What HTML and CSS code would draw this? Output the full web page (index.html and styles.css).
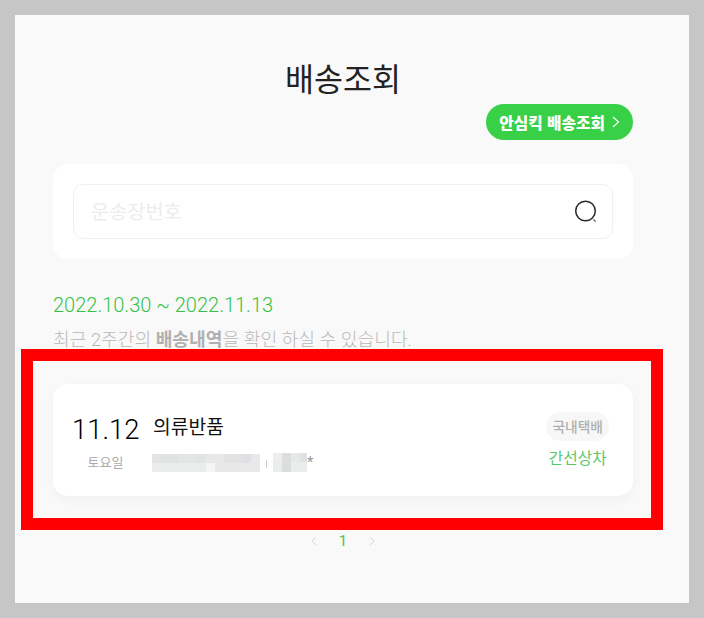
FILE: index.html
```html
<!DOCTYPE html>
<html lang="ko">
<head>
<meta charset="utf-8">
<title>배송조회</title>
<link rel="stylesheet" href="styles.css">
</head>
<body>
<main class="panel">
  <h1 class="title">배송조회</h1>
  <div class="quick-row">
    <a class="quick-btn">안심킥 배송조회
      <svg class="quick-arrow" width="8" height="12" viewBox="0 0 8 12"><path d="M1 1l5.5 5L1 11" fill="none" stroke="#fff" stroke-width="1.1"/></svg>
    </a>
  </div>
  <section class="search-card">
    <div class="search-box">
      <span class="placeholder">운송장번호</span>
      <svg class="search-icon" width="24" height="24" viewBox="0 0 24 24"><circle cx="11.5" cy="11" r="9.8" fill="none" stroke="#2a2a2a" stroke-width="1.5"/><path d="M19.5 19.5l2.2 2.2" fill="none" stroke="#555" stroke-width="1.2"/></svg>
    </div>
  </section>
  <p class="period">2022.10.30 ~ 2022.11.13</p>
  <p class="note">최근 2주간의 <b>배송내역</b>을 확인 하실 수 있습니다.</p>
  <section class="item-card">
    <div class="date-col">
      <div class="date">11.12</div>
      <div class="weekday">토요일</div>
    </div>
    <div class="info-col">
      <div class="item-name">의류반품</div>
      <div class="masked">
        <svg width="108" height="18" viewBox="0 0 108 18" class="mosaic"><rect width="108" height="18" fill="#e9e9e9"/><rect width="9" height="9" fill="#e4e4e4"/><rect x="9" width="18" height="9" fill="#e1e2e2"/><rect x="27" width="18" height="9" fill="#e4e5e5"/><rect x="45" width="9" height="9" fill="#e2e3e3"/><rect x="54" width="18" height="9" fill="#e8e8e8"/><rect x="72" width="18" height="9" fill="#e2e2e2"/><rect x="90" width="9" height="9" fill="#dfe0e4"/><rect y="9" width="54" height="9" fill="#ebecec"/><rect x="54" y="9" width="9" height="9" fill="#f5f5f5"/><rect x="63" y="9" width="27" height="9" fill="#e8e8e8"/></svg>
        <span class="sep"></span>
        <svg width="34" height="19" viewBox="0 0 34 19" class="mosaic"><rect width="34" height="19" fill="#ebecec"/><rect width="9" height="9" fill="#eeeeee"/><rect x="9" width="9" height="19" fill="#dcdede"/><rect x="18" width="9" height="9" fill="#e8e7e7"/><rect x="27" width="7" height="9" fill="#dde2e2"/></svg>
        <span class="star">*</span>
      </div>
    </div>
    <div class="status-col">
      <span class="tag">국내택배</span>
      <span class="status">간선상차</span>
    </div>
  </section>
  <nav class="pager">
    <svg width="8" height="10" viewBox="0 0 8 10"><path d="M6 1L2 5l4 4" fill="none" stroke="#d6d6d6"/></svg>
    <span class="page-num">1</span>
    <svg width="8" height="10" viewBox="0 0 8 10"><path d="M2 1l4 4-4 4" fill="none" stroke="#d6d6d6"/></svg>
  </nav>
  <div class="highlight"></div>
</main>
</body>
</html>
```
FILE: styles.css
```css
html, body { margin: 0; height: 100%; }
body {
  background: #c6c6c6;
  padding: 15px;
  box-sizing: border-box;
  height: 618px;
  overflow: hidden;
  font-family: "Noto Sans CJK KR", "Noto Sans", sans-serif;
}
.panel {
  position: relative;
  width: 674px;
  height: 588px;
  background: #f9f9f9;
  padding: 42px 56px 0 38px;
  box-sizing: border-box;
}
.title {
  margin: 0;
  height: 40px;
  line-height: 40px;
  font-size: 31.5px;
  font-weight: 400;
  color: #222;
  text-align: center;
}
.quick-row { display: flex; justify-content: flex-end; margin-top: 7px; }
.quick-btn {
  display: flex;
  align-items: center;
  gap: 7px;
  height: 36px;
  box-sizing: border-box;
  padding: 0 13px;
  border-radius: 18px;
  background: #37d047;
  color: #fff;
  font-size: 15.75px;
  font-weight: 900;
  white-space: nowrap;
}
.search-card {
  margin-top: 24px;
  height: 95px;
  box-sizing: border-box;
  padding: 20px;
  background: #fff;
  border-radius: 15px;
}
.search-box {
  height: 55px;
  box-sizing: border-box;
  border: 1px solid #f0f0f0;
  border-radius: 10px;
  padding: 0 14px 0 17px;
  display: flex;
  align-items: center;
  justify-content: space-between;
}
.placeholder { font-size: 19.75px; color: #ececec; margin-top: -2px; }
.period {
  margin: 33px 0 0;
  font-family: Roboto, sans-serif;
  font-size: 20px;
  font-weight: 300;
  line-height: 26px;
  color: #35c345;
}
.note {
  margin: 10px 0 0;
  font-family: Roboto, "Noto Sans CJK KR", sans-serif;
  font-size: 18.2px;
  font-weight: 300;
  line-height: 24px;
  color: #b8b8b8;
}
.note b { color: #b0b0b0; font-weight: 700; }
.item-card {
  margin-top: 32px;
  height: 112px;
  box-sizing: border-box;
  padding: 28px 24px 0 19px;
  background: #fff;
  border-radius: 15px;
  box-shadow: 0 4px 12px rgba(0,0,0,.04);
  display: flex;
  align-items: flex-start;
}
.date-col { width: 67px; text-align: center; margin-top: 1px; }
.date { font-family: Roboto, sans-serif; font-size: 27.5px; font-weight: 300; line-height: 34px; color: #000; }
.weekday { margin-top: 5px; font-size: 13px; line-height: 20px; color: #aaa; }
.info-col { margin-left: 14px; margin-top: 1px; flex: 1; }
.item-name { font-size: 19.25px; line-height: 26px; color: #111; font-weight: 400; }
.masked { display: flex; align-items: center; margin-top: 14px; height: 19px; }
.sep { width: 1px; height: 8px; background: #ccc; margin: 2px 6px 0; }
.mosaic { display: block; }
.masked .mosaic:first-child { margin-left: -1px; }
.star { font-family: Roboto, sans-serif; font-size: 15px; line-height: 19px; color: #999; align-self: flex-start; }
.status-col { display: flex; flex-direction: column; align-items: center; }
.tag {
  height: 29px;
  line-height: 29px;
  padding: 0 6px;
  border-radius: 15px;
  background: #f7f7f7;
  font-size: 13.75px;
  color: #b0b0b0;
  font-weight: 500;
}
.status { margin-top: 5px; font-size: 15.75px; line-height: 24px; color: #58c968; }
.pager {
  margin-top: 35px;
  display: flex;
  justify-content: center;
  align-items: center;
  gap: 21px;
}
.page-num { font-family: Roboto, sans-serif; font-size: 15px; line-height: 20px; color: #46c653; }
.highlight {
  position: absolute;
  left: 6px;
  top: 334px;
  width: 642px;
  height: 181px;
  box-sizing: border-box;
  border: 12px solid #f00;
}
```
